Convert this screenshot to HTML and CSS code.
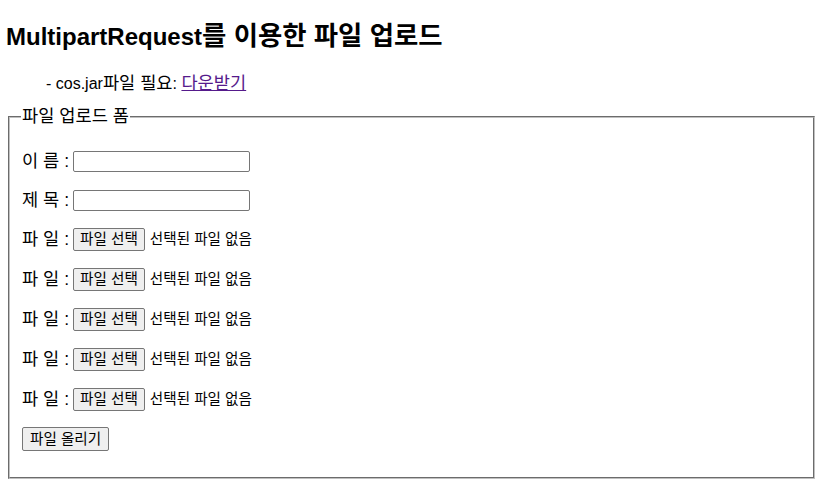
FILE: index.html
```html
<!DOCTYPE html>
<html lang="ko">
<head>
  <meta charset="UTF-8">
  <meta name="viewport" content="width=device-width, initial-scale=1.0">
  <title>MultipartRequest 파일 업로드</title>
  <link rel="stylesheet" href="styles.css">
</head>
<body>

  <h2 class="title">MultipartRequest<span class="ko">를 이용한 파일 업로드</span></h2>

  <ul class="note">
    <li>- cos.jar<span class="ko">파일 필요</span>: <a href="#" class="ko">다운받기</a></li>
  </ul>

  <fieldset class="upload">
    <legend>파일 업로드 폼</legend>
    <form class="upload-form">
      <div class="row text-row">
        <label for="name">이 름 :</label>
        <input type="text" id="name" class="field">
      </div>
      <div class="row text-row second">
        <label for="subject">제 목 :</label>
        <input type="text" id="subject" class="field">
      </div>
      <!-- file inputs drawn by hand so the labels stay in Korean -->
      <div class="row file-row">
        <label>파 일 :</label>
        <button type="button" class="btn">파일 선택</button>
        <span class="none">선택된 파일 없음</span>
      </div>
      <div class="row file-row">
        <label>파 일 :</label>
        <button type="button" class="btn">파일 선택</button>
        <span class="none">선택된 파일 없음</span>
      </div>
      <div class="row file-row">
        <label>파 일 :</label>
        <button type="button" class="btn">파일 선택</button>
        <span class="none">선택된 파일 없음</span>
      </div>
      <div class="row file-row">
        <label>파 일 :</label>
        <button type="button" class="btn">파일 선택</button>
        <span class="none">선택된 파일 없음</span>
      </div>
      <div class="row file-row">
        <label>파 일 :</label>
        <button type="button" class="btn">파일 선택</button>
        <span class="none">선택된 파일 없음</span>
      </div>
      <div class="row file-row">
        <button type="button" class="btn submit">파일 올리기</button>
      </div>
    </form>
  </fieldset>

</body>
</html>
```

FILE: styles.css
```css
body {
  margin: 0;
  padding: 20px 8px 0;
  font-family: "Liberation Sans", "Noto Sans CJK KR", sans-serif;
  font-size: 16px;
  line-height: 21px;
  color: #000;
  background: #fff;
}

/* hangul in Noto CJK runs narrower than the original font, so bump it */
.ko {
  font-size: 1.1em;
}

.title {
  margin: 0 0 20px -2px;
  font-size: 24px;
  line-height: 32px;
  font-weight: bold;
}

.note {
  list-style: none;
  margin: 0 0 12px;
  padding-left: 38px;
}

.note a {
  color: #551a8b;
  text-decoration: underline;
}

.upload {
  margin: 0;
  padding: 0 12px 10px;
  border: 2px groove rgb(192, 192, 192);
}

.upload legend {
  padding: 0 1px;
  margin-left: -1px;
  font-size: 17.6px;
  line-height: 21px;
}

.upload-form {
  display: flex;
  flex-direction: column;
  gap: 16px;
  padding-top: 24px;
  padding-bottom: 16px;
}

.row {
  display: flex;
  align-items: center;
  white-space: nowrap;
}

.text-row {
  height: 21px;
}

.text-row.second {
  margin-top: 2px;
}

.file-row {
  height: 24px;
}

.row label {
  margin-right: 4px;
  font-size: 17.6px;
}

.field {
  box-sizing: border-box;
  width: 177px;
  height: 21px;
  margin: 0;
  padding: 1px 2px;
  border: 1px solid #767676;
  border-radius: 2px;
  font-size: 13.33px;
}

.btn {
  box-sizing: border-box;
  height: 23px;
  margin: 0;
  padding: 0 6px;
  font-family: "Liberation Sans", "Noto Sans CJK KR", sans-serif;
  font-size: 14.6px;
  line-height: 21px;
  color: #000;
  background: #efefef;
  border: 1px solid #767676;
  border-radius: 2px;
}

.submit {
  height: 24px;
  padding: 0 7px;
}

.none {
  margin-left: 5px;
  font-size: 14.6px;
}
```
